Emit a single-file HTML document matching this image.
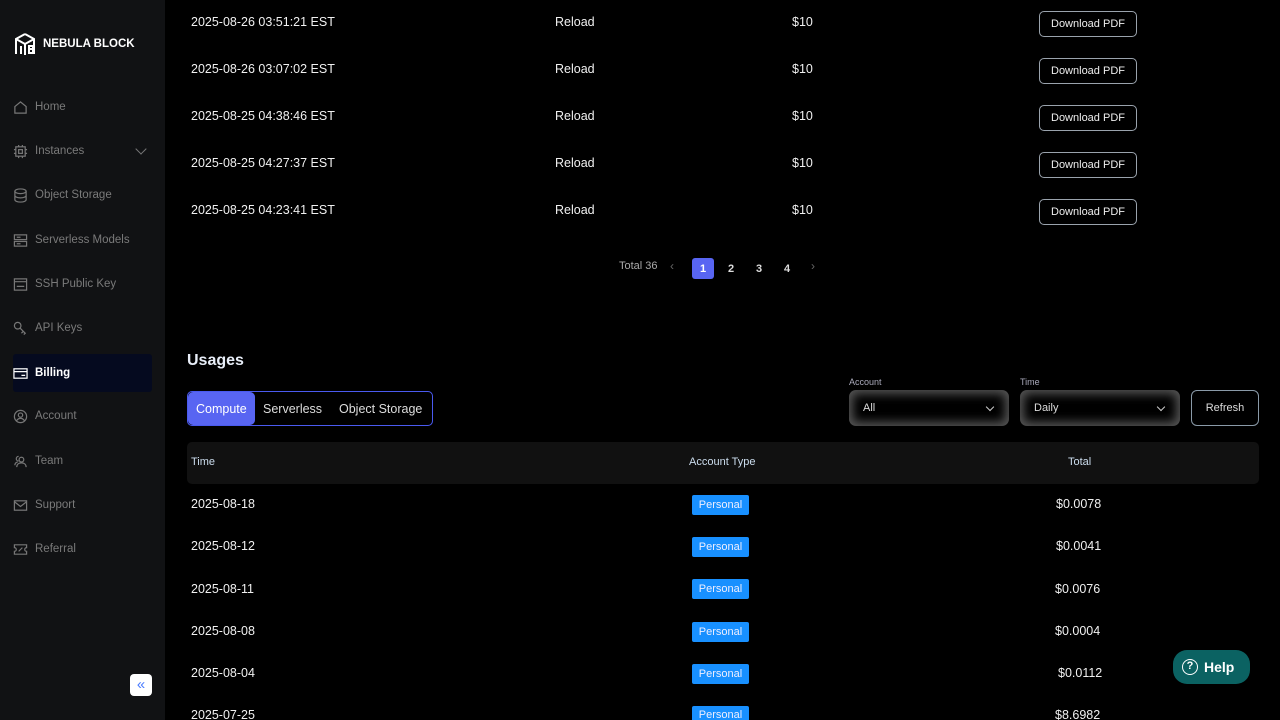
<!DOCTYPE html><html style="overflow:hidden;height:720px"><head><style>
*{margin:0;padding:0;box-sizing:border-box}
body{width:1280px;height:720px;overflow:hidden;background:#000;font-family:"Liberation Sans",sans-serif;color:#fff;position:relative}
.a{position:absolute;white-space:nowrap}
#sb{position:absolute;left:0;top:0;width:165px;height:720px;background:#111214}
.nav{position:absolute;left:13px;width:139px;height:38px;font-size:11.5px;color:#7a7a7a;display:flex;align-items:center}
.nav svg{margin-right:7px;width:15px;height:15px;fill:none;stroke:#777;stroke-width:1.3}
.row{font-size:12.5px;color:#f0f0f0}
.btn{position:absolute;left:1039px;width:98px;height:26px;border:1px solid #9aa3ad;border-radius:5px;font-size:11px;color:#eee;display:flex;align-items:center;justify-content:center}
.badge{position:absolute;left:692px;width:57px;height:20px;background:#1890ff;border-radius:2px;font-size:11px;color:#eef;display:flex;align-items:center;justify-content:center}
.sel{position:absolute;top:390px;width:160px;height:36px;border-radius:7px;background:#000;box-shadow:inset 0 0 10px 4px #555;font-size:11px;color:#ddd;padding-left:14px;display:flex;align-items:center}
.sel:after{content:"";position:absolute;right:16px;top:14px;width:5px;height:5px;border-right:1px solid #ccc;border-bottom:1px solid #ccc;transform:rotate(45deg)}
.pg{position:absolute;top:258px;width:22px;height:21px;font-size:11px;color:#ddd;display:flex;align-items:center;justify-content:center;font-weight:bold}
</style></head><body>
<div id="sb">
<div class="a" style="left:13px;top:32px;"><svg width="24" height="25" viewBox="0 0 24 25" fill="none" stroke="#fff" stroke-width="2"><path d="M12 2L3 7v15M12 2l9 5v15M3 7l9 5 9-5M12 12v11M8 14v8M16 14h4v3h-4zM16 17h4v4h-4z"/></svg></div>
<div class="a" style="left:43px;top:38px;font-size:11.5px;font-weight:bold;">NEBULA BLOCK</div>
<div class="nav" style="top:88px"><svg viewBox="0 0 16 16"><path d="M2 7l6-5 6 5v7H2z"/></svg>Home</div>
<div class="nav" style="top:132px"><svg viewBox="0 0 16 16"><rect x="3" y="3" width="10" height="10"/><rect x="6" y="6" width="4" height="4"/><path d="M1 6h2M1 10h2M13 6h2M13 10h2M6 1v2M10 1v2M6 13v2M10 13v2"/></svg>Instances<span style="position:absolute;left:124px;top:13px;width:8px;height:8px;border-right:1px solid #777;border-bottom:1px solid #777;transform:rotate(45deg)"></span></div>
<div class="nav" style="top:176px"><svg viewBox="0 0 16 16"><ellipse cx="8" cy="3.5" rx="6" ry="2.5"/><path d="M2 3.5v9c0 1.4 2.7 2.5 6 2.5s6-1.1 6-2.5v-9M2 8c0 1.4 2.7 2.5 6 2.5s6-1.1 6-2.5"/></svg>Object Storage</div>
<div class="nav" style="top:221px"><svg viewBox="0 0 16 16"><rect x="1.5" y="2" width="13" height="5"/><rect x="1.5" y="9" width="13" height="5"/><path d="M4 4.5h4M4 11.5h4"/></svg>Serverless Models</div>
<div class="nav" style="top:265px"><svg viewBox="0 0 16 16"><rect x="1.5" y="2" width="13" height="12"/><path d="M1.5 5h13M4 10h8"/></svg>SSH Public Key</div>
<div class="nav" style="top:309px"><svg viewBox="0 0 16 16"><circle cx="5" cy="5" r="3.5"/><path d="M7.5 7.5l6 6M11 11l-2 2M13 13l-1.5 1.5"/></svg>API Keys</div>
<div class="nav" style="top:354px;background:#050a1f;color:#fff;font-weight:bold;border-radius:3px"><svg viewBox="0 0 16 16" style="stroke:#fff"><rect x="1" y="3" width="14" height="10"/><path d="M1 6h14M9 10h4"/></svg>Billing</div>
<div class="nav" style="top:397px"><svg viewBox="0 0 16 16"><circle cx="8" cy="8" r="6.5"/><circle cx="8" cy="6.5" r="2.3"/><path d="M3.7 12.8c1-2 2.5-2.8 4.3-2.8s3.3.8 4.3 2.8"/></svg>Account</div>
<div class="nav" style="top:442px"><svg viewBox="0 0 16 16"><circle cx="9" cy="6" r="2.5"/><path d="M4 14c0-3 2.2-4.5 5-4.5s5 1.5 5 4.5M6 2.5a2.5 2.5 0 0 0 0 5M2 12c0-2 1-3 3-3.5"/></svg>Team</div>
<div class="nav" style="top:486px"><svg viewBox="0 0 16 16"><rect x="1.5" y="3" width="13" height="10"/><path d="M1.5 4l6.5 5 6.5-5"/></svg>Support</div>
<div class="nav" style="top:530px"><svg viewBox="0 0 16 16"><path d="M1.5 3h13v3a2 2 0 0 0 0 4v3h-13v-3a2 2 0 0 0 0-4z M6 10l4-4"/></svg>Referral</div>
<div class="a" style="left:130px;top:674px;width:22px;height:22px;background:#fff;border-radius:4px;color:#4a7cff;font-size:15px;text-align:center;line-height:21px">«</div>
</div>

<div class="a row" style="left:191px;top:15px">2025-08-26 03:51:21 EST</div><div class="a row" style="left:555px;top:15px">Reload</div><div class="a row" style="left:792px;top:15px">$10</div><div class="btn" style="top:11px">Download PDF</div>
<div class="a row" style="left:191px;top:62px">2025-08-26 03:07:02 EST</div><div class="a row" style="left:555px;top:62px">Reload</div><div class="a row" style="left:792px;top:62px">$10</div><div class="btn" style="top:58px">Download PDF</div>
<div class="a row" style="left:191px;top:109px">2025-08-25 04:38:46 EST</div><div class="a row" style="left:555px;top:109px">Reload</div><div class="a row" style="left:792px;top:109px">$10</div><div class="btn" style="top:105px">Download PDF</div>
<div class="a row" style="left:191px;top:156px">2025-08-25 04:27:37 EST</div><div class="a row" style="left:555px;top:156px">Reload</div><div class="a row" style="left:792px;top:156px">$10</div><div class="btn" style="top:152px">Download PDF</div>
<div class="a row" style="left:191px;top:203px">2025-08-25 04:23:41 EST</div><div class="a row" style="left:555px;top:203px">Reload</div><div class="a row" style="left:792px;top:203px">$10</div><div class="btn" style="top:199px">Download PDF</div>

<div class="a" style="left:619px;top:260px;font-size:11px;color:#aaa">Total 36</div>
<div class="a" style="left:670px;top:259px;font-size:12px;color:#666">‹</div>
<div class="pg" style="left:692px;background:#5865f2;border-radius:3px;color:#fff">1</div>
<div class="pg" style="left:720px">2</div><div class="pg" style="left:748px">3</div><div class="pg" style="left:776px">4</div>
<div class="a" style="left:811px;top:259px;font-size:12px;color:#666">›</div>

<div class="a" style="left:187px;top:352px;font-size:16px;font-weight:bold;color:#e8eef8">Usages</div>
<div class="a" style="left:187px;top:391px;width:246px;height:35px;border:1px solid #4a5af0;border-radius:5px"></div>
<div class="a" style="left:188px;top:392px;width:67px;height:33px;background:#5865f2;border-radius:5px"></div>
<div class="a" style="left:196px;top:402px;font-size:12.5px;color:#fff">Compute</div>
<div class="a" style="left:263px;top:402px;font-size:12.5px;color:#ddd">Serverless</div>
<div class="a" style="left:339px;top:402px;font-size:12.5px;color:#ddd">Object Storage</div>

<div class="a" style="left:849px;top:377px;font-size:9px;color:#aab">Account</div>
<div class="a" style="left:1020px;top:377px;font-size:9px;color:#aab">Time</div>
<div class="sel" style="left:849px">All</div>
<div class="sel" style="left:1020px">Daily</div>
<div class="a" style="left:1191px;top:390px;width:68px;height:36px;border:1px solid #8a9aa8;border-radius:6px;font-size:11px;color:#ddd;text-align:center;line-height:34px">Refresh</div>

<div class="a" style="left:187px;top:442px;width:1072px;height:42px;background:#111;border-radius:5px"></div>
<div class="a" style="left:191px;top:456px;font-size:11px;color:#cde">Time</div>
<div class="a" style="left:689px;top:456px;font-size:11px;color:#cde">Account Type</div>
<div class="a" style="left:1068px;top:456px;font-size:11px;color:#cde">Total</div>

<div class="a row" style="left:191px;top:497px">2025-08-18</div><div class="badge" style="top:495px">Personal</div><div class="a row" style="left:1056px;top:497px">$0.0078</div>
<div class="a row" style="left:191px;top:539px">2025-08-12</div><div class="badge" style="top:537px">Personal</div><div class="a row" style="left:1056px;top:539px">$0.0041</div>
<div class="a row" style="left:191px;top:582px">2025-08-11</div><div class="badge" style="top:579px">Personal</div><div class="a row" style="left:1055px;top:582px">$0.0076</div>
<div class="a row" style="left:191px;top:624px">2025-08-08</div><div class="badge" style="top:622px">Personal</div><div class="a row" style="left:1055px;top:624px">$0.0004</div>
<div class="a row" style="left:191px;top:666px">2025-08-04</div><div class="badge" style="top:664px">Personal</div><div class="a row" style="left:1058px;top:666px">$0.0112</div>
<div class="a row" style="left:191px;top:708px">2025-07-25</div><div class="badge" style="top:706px;height:14px;align-items:flex-start;padding-top:3px;border-radius:2px 2px 0 0">Personal</div><div class="a row" style="left:1055px;top:708px">$8.6982</div>

<div class="a" style="left:1173px;top:650px;width:77px;height:34px;background:#0b6262;border-radius:14px;display:flex;align-items:center;padding-left:9px;font-size:14px;font-weight:bold"><span style="display:inline-block;width:16px;height:16px;border:1.5px solid #fff;border-radius:50%;font-size:11px;text-align:center;line-height:13px;margin-right:6px">?</span>Help</div>
</body></html>
